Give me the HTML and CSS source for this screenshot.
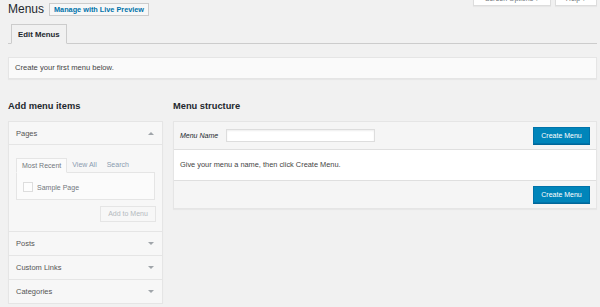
FILE: index.html
```html
<!DOCTYPE html>
<html lang="en">

<head>
    <meta charset="UTF-8">
    <meta name="viewport" content="width=device-width, initial-scale=1.0">
    <title>Menus</title>
    <link rel="stylesheet" href="styles.css">
</head>

<body>
    <div class="screen-meta">
        <span class="meta-tab meta-options">Screen Options ▾</span>
        <span class="meta-tab meta-help">Help ▾</span>
    </div>
    <div class="wrap">
        <div class="page-title">
            <h1>Menus</h1>
            <span class="title-action">Manage with Live Preview</span>
        </div>

        <div class="nav-tabs">
            <span class="nav-tab active">Edit Menus</span>
        </div>

        <div class="notice">Create your first menu below.</div>

        <div class="columns">
            <div class="col-left">
                <h2>Add menu items</h2>
                <div class="accordion">
                    <div class="section open">
                        <div class="section-title">Pages <span class="arrow up"></span></div>
                        <div class="section-body">
                            <div class="tabs">
                                <span class="tab active">Most Recent</span>
                                <span class="tab">View All</span>
                                <span class="tab">Search</span>
                            </div>
                            <div class="tab-panel">
                                <label class="item"><span class="checkbox"></span>Sample Page</label>
                            </div>
                            <div class="actions">
                                <span class="button-disabled">Add to Menu</span>
                            </div>
                        </div>
                    </div>
                    <div class="section">
                        <div class="section-title">Posts <span class="arrow"></span></div>
                    </div>
                    <div class="section">
                        <div class="section-title">Custom Links <span class="arrow"></span></div>
                    </div>
                    <div class="section">
                        <div class="section-title">Categories <span class="arrow"></span></div>
                    </div>
                </div>
            </div>

            <div class="col-right">
                <h2>Menu structure</h2>
                <div class="menu-edit">
                    <div class="menu-header">
                        <label class="menu-name">Menu Name</label>
                        <input type="text" class="menu-input">
                        <span class="button-primary">Create Menu</span>
                    </div>
                    <div class="menu-body">Give your menu a name, then click Create Menu.</div>
                    <div class="menu-footer">
                        <span class="button-primary">Create Menu</span>
                    </div>
                </div>
            </div>
        </div>
    </div>
</body>

</html>
```

FILE: styles.css
```css
* {
    margin: 0;
    padding: 0;
    box-sizing: border-box;
}

body {
    background: #f1f1f1;
    font-family: 'Liberation Sans', Arial, sans-serif;
    color: #444;
    font-size: 7.4px;
}

.screen-meta {
    display: flex;
    justify-content: flex-end;
    gap: 4px;
    height: 0;
    padding-right: 3px;
}

.meta-tab {
    display: block;
    height: 18px;
    margin-top: -12px;
    padding-top: 7px;
    background: #fff;
    border: 1px solid #ddd;
    border-top: none;
    box-shadow: 0 1px 1px rgba(0, 0, 0, 0.04);
    color: #72777c;
    font-size: 7px;
    text-align: center;
}

.meta-options {
    width: 78px;
}

.meta-help {
    width: 42px;
}

.wrap {
    padding: 3px 3px 0 8px;
}

.page-title {
    display: flex;
    align-items: center;
    gap: 5px;
    height: 13px;
}

.page-title h1 {
    font-size: 12px;
    font-weight: 400;
    color: #23282d;
    line-height: 13px;
}

.title-action {
    display: block;
    width: 100px;
    height: 13px;
    line-height: 11px;
    border: 1px solid #ccc;
    background: #f7f7f7;
    color: #0073aa;
    font-size: 7.3px;
    font-weight: bold;
    text-align: center;
}

.nav-tabs {
    display: flex;
    margin-top: 8px;
    padding-left: 3px;
    border-bottom: 1px solid #ccc;
}

.nav-tab {
    display: block;
    height: 20px;
    margin-bottom: -1px;
    padding: 0 6px;
    line-height: 19px;
    border: 1px solid #ccc;
    background: #f1f1f1;
    border-bottom-color: #f1f1f1;
    color: #23282d;
    font-size: 7.8px;
    font-weight: bold;
}

.notice {
    margin-top: 13px;
    height: 22px;
    line-height: 20px;
    padding-left: 6px;
    background: #fafafa;
    border: 1px solid #e5e5e5;
    box-shadow: 0 1px 1px rgba(0, 0, 0, 0.04);
    color: #444;
    font-size: 7.6px;
}

.columns {
    display: flex;
    gap: 10px;
    margin-top: 20px;
}

.col-left {
    width: 155px;
}

.col-right {
    flex: 1;
}

.columns h2 {
    height: 22px;
    font-size: 9.3px;
    font-weight: bold;
    color: #23282d;
    line-height: 14px;
}

.accordion {
    background: #f7f7f7;
    border: 1px solid #e5e5e5;
    box-shadow: 0 1px 1px rgba(0, 0, 0, 0.04);
}

.section+.section {
    border-top: 1px solid #e5e5e5;
}

.section-title {
    display: flex;
    justify-content: space-between;
    align-items: center;
    height: 23px;
    padding: 0 8px 0 7px;
    color: #555;
    font-size: 7.5px;
}

.open .section-title {
    border-bottom: 1px solid #e5e5e5;
}

.arrow {
    width: 0;
    height: 0;
    border-left: 3px solid transparent;
    border-right: 3px solid transparent;
    border-top: 3px solid #a0a5aa;
}

.arrow.up {
    border-top: none;
    border-bottom: 3px solid #a0a5aa;
}

.section-body {
    padding: 13px 7px 9px 7px;
}

.tabs {
    display: flex;
    height: 14px;
}

.tab {
    display: block;
    padding: 0 5px;
    line-height: 13px;
    color: #8a9bb0;
    font-size: 7px;
}

.tab.active {
    border: 1px solid #e5e5e5;
    border-bottom-color: #fbfbfb;
    background: #fbfbfb;
    color: #72777c;
    margin-bottom: -1px;
}

.tab-panel {
    height: 28px;
    padding: 9px 6px 0 6px;
    border: 1px solid #e5e5e5;
    background: #fbfbfb;
}

.item {
    display: flex;
    align-items: center;
    gap: 4px;
    color: #72777c;
    font-size: 7px;
}

.checkbox {
    display: block;
    width: 10px;
    height: 10px;
    border: 1px solid #ddd;
    background: #fdfdfd;
}

.actions {
    display: flex;
    justify-content: flex-end;
    margin: 6px -1px 0 0;
}

.button-disabled {
    display: block;
    width: 56px;
    height: 16px;
    line-height: 14px;
    text-align: center;
    border: 1px solid #e5e5e5;
    background: #f7f7f7;
    color: #b4b9be;
    font-size: 7px;
}

.menu-edit {
    border: 1px solid #e5e5e5;
    background: #f5f5f5;
    box-shadow: 0 1px 1px rgba(0, 0, 0, 0.04);
}

.menu-header {
    display: flex;
    align-items: center;
    height: 28px;
    padding: 0 6px;
    border-bottom: 1px solid #dfdfdf;
}

.menu-name {
    font-style: italic;
    color: #23282d;
    font-size: 7px;
}

.menu-input {
    width: 149px;
    height: 13px;
    margin-left: 8px;
    border: 1px solid #ddd;
    background: #fff;
    box-shadow: inset 0 1px 2px rgba(0, 0, 0, 0.07);
}

.menu-header .button-primary {
    margin-left: auto;
}

.button-primary {
    display: block;
    width: 57px;
    height: 17px;
    line-height: 15px;
    text-align: center;
    background: #0085ba;
    border: 1px solid #0073aa;
    box-shadow: 0 1px 0 #006799;
    color: #fff;
    font-size: 7px;
}

.menu-body {
    height: 30px;
    line-height: 30px;
    padding-left: 6px;
    background: #fff;
    color: #444;
}

.menu-footer {
    display: flex;
    justify-content: flex-end;
    align-items: center;
    height: 28px;
    padding: 0 6px;
    border-top: 1px solid #dfdfdf;
}
```
